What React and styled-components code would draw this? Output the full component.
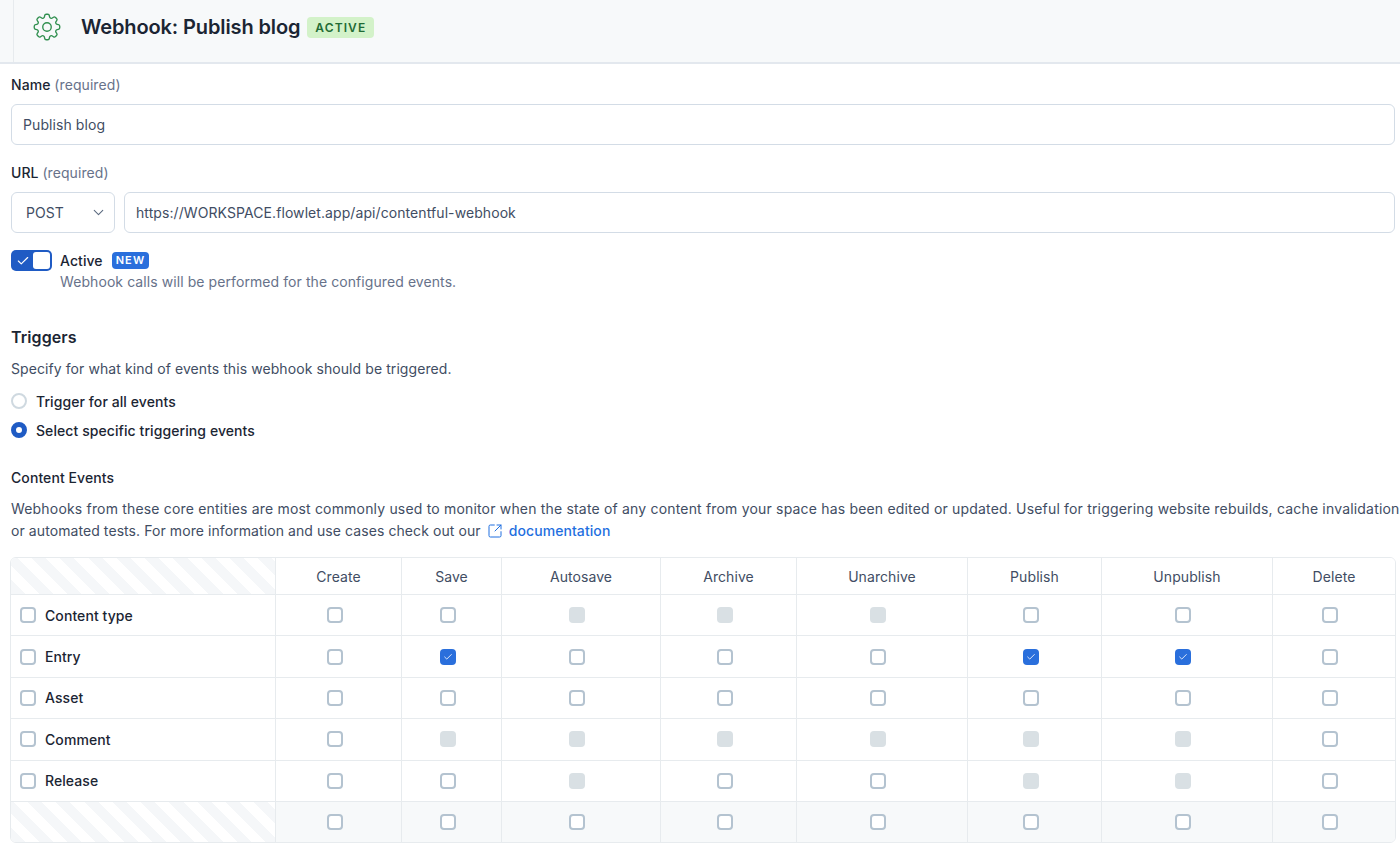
import React from "react"
import styled, { createGlobalStyle } from "styled-components"
import { ChevronDown, Check, SquareArrowOutUpRight } from "lucide-react"
import { HiOutlineCog8Tooth } from "react-icons/hi2"

const GlobalStyle = createGlobalStyle`
  html, body {
    margin: 0;
    background: #fff;
    font-family: Inter, "Liberation Sans", sans-serif;
    letter-spacing: 0.08px;
    color: #1b2533;
  }
  * { box-sizing: border-box; }
`

const COLUMNS = ["Create", "Save", "Autosave", "Archive", "Unarchive", "Publish", "Unpublish", "Delete"]

// n = empty, c = checked, d = disabled
const ROWS = [
  { name: "Content type", cells: "nnddd" + "nnn" },
  { name: "Entry", cells: "ncnnn" + "ccn" },
  { name: "Asset", cells: "nnnnn" + "nnn" },
  { name: "Comment", cells: "ndddd" + "ddn" },
  { name: "Release", cells: "nndnn" + "ddn" },
]

const App = () => (
  <>
    <GlobalStyle />
    <Header>
      <HeaderInner>
        <HiOutlineCog8Tooth size={34} strokeWidth={0.95} color="#2f8f4e" />
        <Title>Webhook: Publish blog</Title>
        <Badge $bg="#d3f2c9" $fg="#1f6b35">Active</Badge>
      </HeaderInner>
    </Header>
    <Main>
      <Label>Name <Hint>(required)</Hint></Label>
      <Input>Publish blog</Input>
      <Label $top={18}>URL <Hint>(required)</Hint></Label>
      <UrlRow>
        <Select>POST <ChevronDown size={17} strokeWidth={1.5} color="#5c6b80" /></Select>
        <Input>https://WORKSPACE.flowlet.app/api/contentful-webhook</Input>
      </UrlRow>
      <SwitchRow>
        <Switch>
          <SwitchSide><Check size={14} strokeWidth={2} color="#fff" /></SwitchSide>
          <SwitchKnob />
        </Switch>
        <div>
          <SwitchTitle>
            Active <Badge $bg="#2a6fdc" $fg="#fff" $small>New</Badge>
          </SwitchTitle>
          <Muted>Webhook calls will be performed for the configured events.</Muted>
        </div>
      </SwitchRow>
      <SectionTitle>Triggers</SectionTitle>
      <Muted $top={10}>Specify for what kind of events this webhook should be triggered.</Muted>
      <RadioRow $top={12}><Radio />Trigger for all events</RadioRow>
      <RadioRow $top={9}><Radio $on />Select specific triggering events</RadioRow>
      <SubTitle>Content Events</SubTitle>
      <Paragraph>
        <FirstLine>Webhooks from these core entities are most commonly used to monitor when the state of any content from your space has been edited or updated. Useful for triggering website rebuilds, cache invalidation</FirstLine>
        <br />
        or automated tests. For more information and use cases check out our{" "}
        <DocLink><SquareArrowOutUpRight size={16} strokeWidth={1.5} />documentation</DocLink>
      </Paragraph>
      <Table>
        <Row $height={36}>
          <StripeCell />
          {COLUMNS.map((c) => <HeadCell key={c}>{c}</HeadCell>)}
        </Row>
        {ROWS.map((r) => (
          <Row key={r.name}>
            <NameCell><Box />{r.name}</NameCell>
            {[...r.cells].map((s, i) => <Cell key={i}><Box $state={s} /></Cell>)}
          </Row>
        ))}
        <Row $footer>
          <StripeCell />
          {COLUMNS.map((c) => <Cell key={c}><Box /></Cell>)}
        </Row>
      </Table>
    </Main>
  </>
)

const Box = ({ $state }) => (
  <CheckBox $state={$state}>
    {$state === "c" && <Check size={10} strokeWidth={2} color="#fff" />}
  </CheckBox>
)

const Header = styled.header`
  height: 64px;
  background: #f7f9fa;
  border-bottom: 2px solid #e3e8ee;
  padding-left: 13px;
`
const HeaderInner = styled.div`
  height: 100%;
  border-left: 1px solid #e7ebee;
  padding: 0 0 8px 16px;
  display: flex;
  align-items: center;
`
const Title = styled.h1`
  margin: 0 7px 0 17px;
  font-size: 20px;
  line-height: 28px;
  font-weight: 600;
  letter-spacing: -0.12px;
  color: #1b2533;
`
const Badge = styled.span`
  display: inline-block;
  background: ${(p) => p.$bg};
  color: ${(p) => p.$fg};
  font-size: ${(p) => (p.$small ? "11px" : "12px")};
  line-height: ${(p) => (p.$small ? "17px" : "21px")};
  font-weight: 600;
  letter-spacing: 1.1px;
  text-transform: uppercase;
  padding: 0 ${(p) => (p.$small ? 4 : 8)}px;
  border-radius: 4px;
`
const Main = styled.main`
  padding: 0 5px 0 11px;
`
const Label = styled.div`
  margin-top: ${(p) => p.$top ?? 11}px;
  font-size: 14px;
  line-height: 20px;
  font-weight: 500;
  color: #1b2533;
`
const Hint = styled.span`
  font-weight: 400;
  color: #67728a;
`
const Input = styled.div`
  flex: 1;
  height: 41px;
  margin-top: 9px;
  padding: 0 11px;
  display: flex;
  align-items: center;
  border: 1px solid #d3dce6;
  border-radius: 6px;
  font-size: 14px;
  color: #414d63;
  background: #fff;
`
const UrlRow = styled.div`
  display: flex;
  gap: 9px;
`
const Select = styled(Input)`
  flex: 0 0 104px;
  padding: 0 7px 0 14px;
  justify-content: space-between;
`
const SwitchRow = styled.div`
  display: flex;
  gap: 8px;
  margin-top: 17px;
`
const Switch = styled.div`
  flex: none;
  width: 41px;
  height: 21px;
  padding: 2px;
  display: flex;
  background: #1f5bc4;
  border-radius: 5px;
`
const SwitchSide = styled.div`
  flex: 1;
  display: flex;
  align-items: center;
  justify-content: center;
`
const SwitchKnob = styled.div`
  width: 17px;
  background: #fff;
  border-radius: 3px;
`
const SwitchTitle = styled.div`
  display: flex;
  align-items: center;
  gap: 9px;
  height: 20px;
  font-size: 14px;
  font-weight: 500;
  color: #1b2533;
`
const Muted = styled.div`
  margin-top: ${(p) => p.$top ?? 2}px;
  font-size: 14px;
  line-height: 20px;
  color: #67728a;
  ${(p) => p.$top && "color: #414d63;"}
`
const SectionTitle = styled.h2`
  margin: 33px 0 0;
  font-size: 16px;
  line-height: 24px;
  font-weight: 600;
  color: #1b2533;
`
const RadioRow = styled.div`
  margin-top: ${(p) => p.$top}px;
  display: flex;
  align-items: center;
  gap: 9px;
  height: 20px;
  font-size: 14px;
  font-weight: 500;
  color: #1b2533;
`
const Radio = styled.span`
  flex: none;
  width: 16px;
  height: 16px;
  border-radius: 50%;
  background: #fff;
  border: ${(p) => (p.$on ? "5px solid #1f5bc4" : "2px solid #cfd9e0")};
`
const SubTitle = styled.div`
  margin-top: 28px;
  font-size: 14px;
  line-height: 20px;
  font-weight: 500;
  color: #1b2533;
`
const Paragraph = styled.p`
  margin: 10px 0 0;
  font-size: 14px;
  line-height: 22px;
  color: #414d63;
  white-space: nowrap;
`
const FirstLine = styled.span`
  letter-spacing: 0.18px;
`
const DocLink = styled.a`
  display: inline-flex;
  align-items: center;
  gap: 6px;
  margin-left: 2px;
  height: 22px;
  color: #1f6fe0;
  font-weight: 500;
  vertical-align: top;
`
const Table = styled.div`
  margin: 15px -1px 0;
  border: 1px solid #e7ebee;
  border-radius: 6px;
  overflow: hidden;
`
const Row = styled.div`
  display: grid;
  grid-template-columns: 264px 126px 100px 159px 136px 171px 134px 171px 1fr;
  height: ${(p) => p.$height ?? 41.4}px;
  background: ${(p) => (p.$footer ? "#f7f9fa" : "#fff")};
  & + & { border-top: 1px solid #e7ebee; }
  & > * + * { border-left: 1px solid #e7ebee; }
`
const StripeCell = styled.div`
  background: repeating-linear-gradient(45deg, #f5f7f9 0 10px, #fff 10px 20px);
`
const HeadCell = styled.div`
  display: flex;
  align-items: center;
  justify-content: center;
  font-size: 14px;
  color: #414d63;
`
const Cell = styled.div`
  display: flex;
  align-items: center;
  justify-content: center;
  padding-right: 8px;
`
const NameCell = styled.div`
  display: flex;
  align-items: center;
  gap: 9px;
  padding-left: 9px;
  font-size: 14px;
  font-weight: 500;
  color: #1b2533;
`
const CheckBox = styled.span`
  flex: none;
  width: 16px;
  height: 16px;
  display: flex;
  align-items: center;
  justify-content: center;
  border-radius: 4px;
  border: ${(p) => (p.$state === "c" || p.$state === "d" ? "none" : "2px solid #b4c3d0")};
  background: ${(p) => (p.$state === "c" ? "#2a6fdc" : p.$state === "d" ? "#d9e0e4" : "#fff")};
`

export default App
